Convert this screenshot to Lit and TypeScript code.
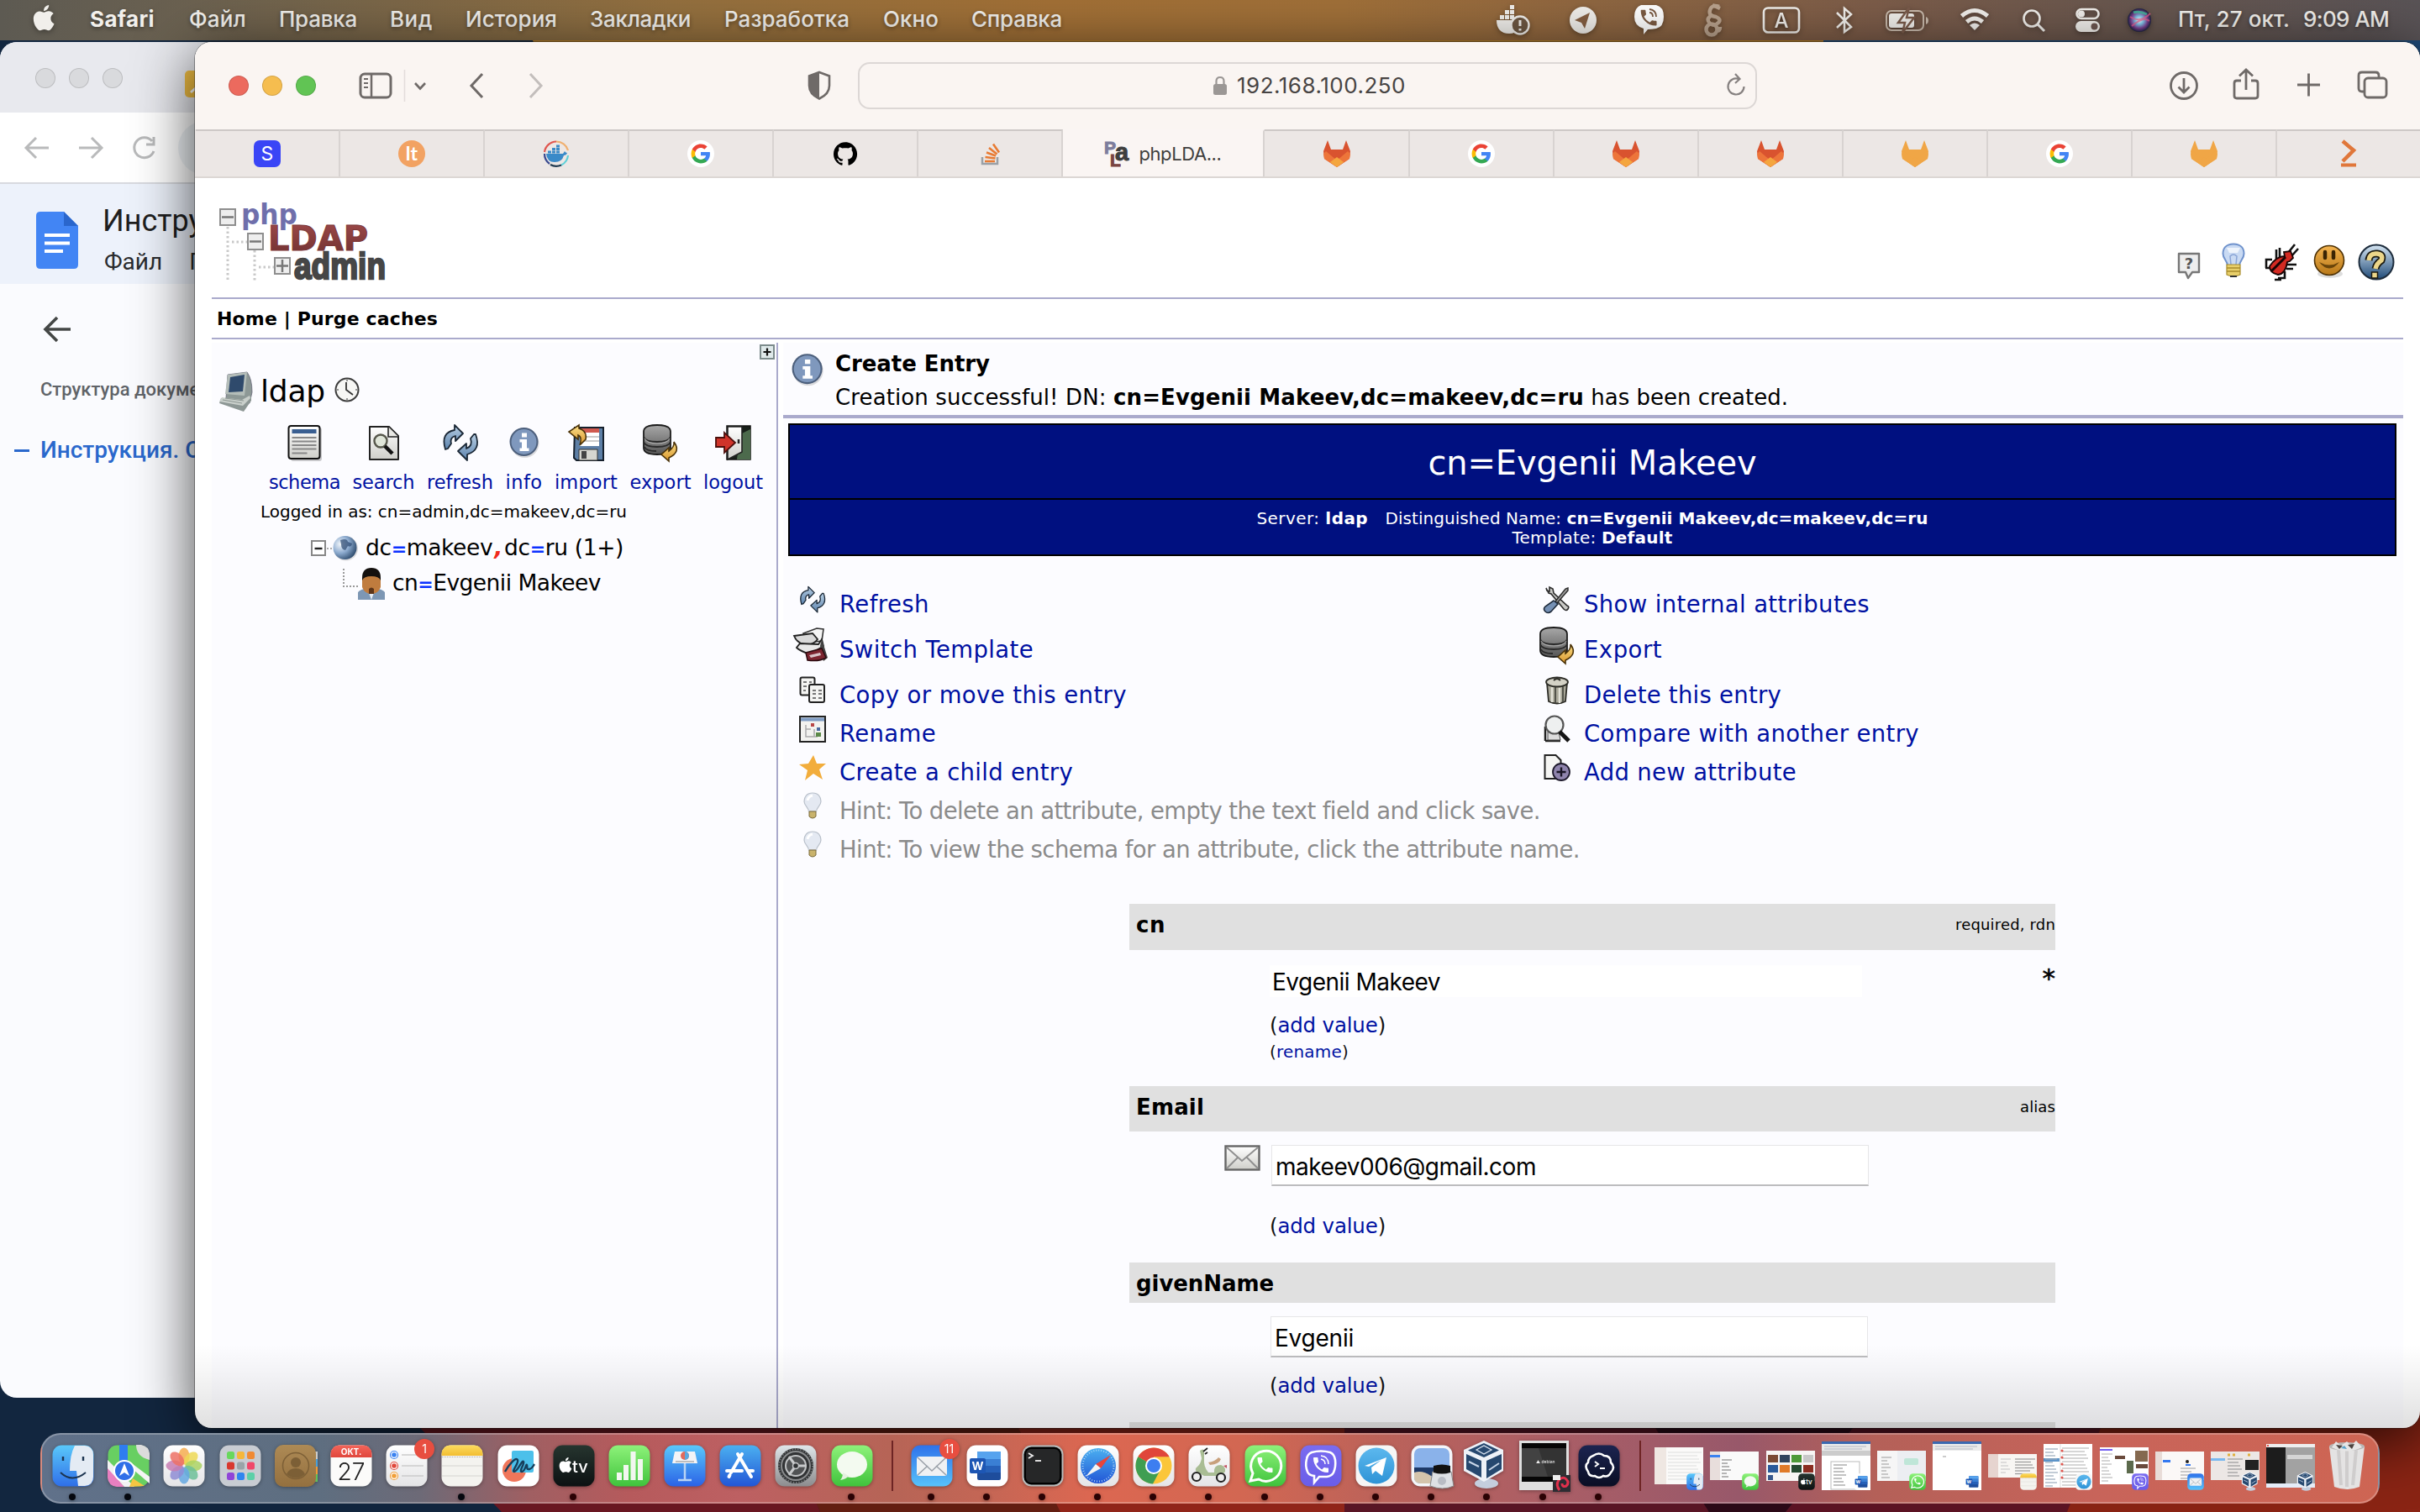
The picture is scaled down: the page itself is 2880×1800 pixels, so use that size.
import { LitElement, html, css, svg, nothing } from "lit";
import { customElement, property } from "lit/decorators.js";

/** Inline label whose tracking is adjusted so that it spans `w` pixels. */
@customElement("fit-text")
class FitText extends LitElement {
  @property({ type: Number }) w = 0;
  static styles = css`
    :host { display: inline-block; white-space: pre; }
  `;
  render() {
    return html`<slot></slot>`;
  }
  firstUpdated() {
    const natural = this.getBoundingClientRect().width;
    const count = (this.textContent || "").length;
    if (this.w && count) this.style.letterSpacing = `${(this.w - natural) / count}px`;
  }
}

const fit = (w: number, text: unknown, cls = "") => html`<fit-text class=${cls} w=${w}>${text}</fit-text>`;
const pic = (w: number, h: number, body: unknown, vb = `0 0 ${w} ${h}`) =>
  html`<svg class="pic" width=${w} height=${h} viewBox=${vb}>${body}</svg>`;

const APPLE = "M12.152 6.896c-.948 0-2.415-1.078-3.96-1.04-2.04.027-3.91 1.183-4.961 3.014-2.117 3.675-.546 9.103 1.519 12.09 1.013 1.454 2.208 3.09 3.792 3.039 1.52-.065 2.09-.987 3.935-.987 1.831 0 2.35.987 3.96.948 1.637-.026 2.676-1.48 3.676-2.948 1.156-1.688 1.636-3.325 1.662-3.415-.039-.013-3.182-1.221-3.22-4.857-.026-3.04 2.48-4.494 2.597-4.559-1.429-2.09-3.623-2.324-4.39-2.376-2-.156-3.675 1.09-4.61 1.09zM15.53 3.83c.843-1.012 1.4-2.427 1.245-3.83-1.207.052-2.662.805-3.532 1.818-.78.896-1.454 2.338-1.273 3.714 1.338.104 2.715-.688 3.559-1.701";
const GITHUB = "M12 .297c-6.63 0-12 5.373-12 12 0 5.303 3.438 9.8 8.205 11.385.6.113.82-.258.82-.577 0-.285-.01-1.04-.015-2.04-3.338.724-4.042-1.61-4.042-1.61C4.422 18.07 3.633 17.7 3.633 17.7c-1.087-.744.084-.729.084-.729 1.205.084 1.838 1.236 1.838 1.236 1.07 1.835 2.809 1.305 3.495.998.108-.776.417-1.305.76-1.605-2.665-.3-5.466-1.332-5.466-5.93 0-1.31.465-2.38 1.235-3.22-.135-.303-.54-1.523.105-3.176 0 0 1.005-.322 3.3 1.23.96-.267 1.98-.399 3-.405 1.02.006 2.04.138 3 .405 2.28-1.552 3.285-1.23 3.285-1.23.645 1.653.24 2.873.12 3.176.765.84 1.23 1.91 1.23 3.22 0 4.61-2.805 5.625-5.475 5.92.42.36.81 1.096.81 2.22 0 1.606-.015 2.896-.015 3.286 0 .315.21.69.825.57C20.565 22.092 24 17.592 24 12.297c0-6.627-5.373-12-12-12";
const PHONE = "M6.62 10.79c1.44 2.83 3.76 5.14 6.59 6.59l2.2-2.2c.27-.27.67-.36 1.02-.24 1.12.37 2.33.57 3.57.57.55 0 1 .45 1 1V20c0 .55-.45 1-1 1-9.39 0-17-7.61-17-17 0-.55.45-1 1-1h3.5c.55 0 1 .45 1 1 0 1.25.2 2.45.57 3.57.11.35.03.74-.25 1.02l-2.2 2.2z";

/* Gradients shared by every drawing on the page. */
const lg = (id: string, a: string, b: string) => svg`<linearGradient id=${id} x1="0" y1="0" x2="0" y2="1"><stop offset="0" stop-color=${a}/><stop offset="1" stop-color=${b}/></linearGradient>`;
const defs = html`<svg class="defs" width="0" height="0"><defs>
  ${lg("gFinder", "#5ac8fa", "#2f6fe8")}${lg("gWhite", "#ffffff", "#e4e4e6")}${lg("gGreen", "#8ef27a", "#3fc33c")}
  ${lg("gBlue", "#5ac8fb", "#2a62e6")}${lg("gStore", "#4bb0f0", "#2256d6")}${lg("gMail", "#2f72ea", "#57c2fa")}
  ${lg("gGray", "#dfe6ea", "#8c8c8e")}${lg("gTan", "#ad8a55", "#94703f")}${lg("gTv", "#26352f", "#0c1112")}
  ${lg("gViber", "#7a6cf0", "#6a5de8")}${lg("gTele", "#5cb8ee", "#2e93d6")}${lg("gTerm", "#1c2450", "#0a0e24")}
  ${lg("gMetal", "#a8a8a8", "#565656")}${lg("gSteel", "#b8cfe4", "#5b82ac")}${lg("gPaper", "#ffffff", "#cfcfca")}
  ${lg("gGold", "#fbe08a", "#d9952a")}${lg("gOrb", "#d6e6f3", "#1f4a78")}${lg("gFace", "#f4b450", "#b87818")}
  ${lg("gLdap", "#a04a4a", "#6e3030")}${lg("gCal", "#f3655a", "#e0463c")}${lg("gNote", "#fcdc60", "#f2bd30")}
  <radialGradient id="gEarth" cx=".3" cy=".35" r=".75"><stop offset="0" stop-color="#f2f6fa"/><stop offset=".5" stop-color="#8eacd0"/><stop offset="1" stop-color="#2c4a6c"/></radialGradient>
  <radialGradient id="gSiri"><stop offset="0" stop-color="#fff"/><stop offset=".35" stop-color="#7fc4e8"/><stop offset=".7" stop-color="#7a3f8f"/><stop offset="1" stop-color="#1d2340"/></radialGradient>
</defs></svg>`;

/* ---------- menu bar ---------- */
const W = "#f1efeb";
const menus: [string, number, number][] = [
  ["Файл", 225, 68], ["Правка", 332, 93], ["Вид", 464, 51], ["История", 554, 109],
  ["Закладки", 702, 120], ["Разработка", 862, 149], ["Окно", 1051, 66], ["Справка", 1156, 108],
];
const statusIcons: [number, number, unknown][] = [
  [1780, 42, svg`<g fill=${W}><path d="M1 24h25c3-1 5-1 6 1-1 8-6 15-16 15C6 40 1 34 1 24z"/><path d="M5 17h5v5H5zM11 17h5v5h-5zM17 17h5v5h-5zM11 11h5v5h-5zM17 11h5v5h-5zM17 5h5v5h-5z" transform="translate(0 1)"/></g><circle cx="29" cy="30" r="10.500" fill="#6d5742" stroke=${W} stroke-width="2.400"/><path d="M29 24v7M29 34v2.500" stroke=${W} stroke-width="3"/>`],
  [1867, 34, svg`<circle cx="17" cy="24" r="16" fill=${W}/><path d="M7 24 25 15l-6 19-4-7z" fill="#855f42"/>`],
  [1943, 38, svg`<path d="M10 6h18q9 2 9 14t-9 14q-5 1-10 1l-5 6v-7q-11-3-11-14T10 6z" fill="#fff"/><g transform="translate(6.500 8.500) scale(1.050)"><path d=${PHONE} fill="#7b5a42"/></g><path d="M20 11q8 1 8 9M20 15q4 0 4 5" stroke="#7b5a42" stroke-width="1.800" fill="none"/>`],
  [2025, 26, svg`<g fill="none" stroke="#b9a28d" stroke-width="4.500"><path d="M21 8q-9-3-11 4t7 8q7 3 3 7t-8 2"/><circle cx="12" cy="35" r="6.500"/><path d="M13 18q-9 4-3 10M18 36q4 2 4-4M13 6l9 4"/></g>`],
  [2097, 46, svg`<rect x="2" y="9.500" width="42" height="29" rx="5" fill="none" stroke=${W} stroke-width="2.600"/><text x="23" y="33" text-anchor="middle" class="sf" font-size="24" font-weight="500" fill=${W}>A</text>`],
  [2184, 22, svg`<path d="M2 15 19 32 11 38V10l8 7L2 33" fill="none" stroke=${W} stroke-width="2.500"/>`],
  [2243, 54, svg`<rect x="2" y="13" width="44" height="23" rx="6" fill="none" stroke="#c8b9ab" stroke-width="2"/><path d="M49 20q3 1 3 4.500t-3 4.500z" fill="#c8b9ab"/><rect x="5" y="16" width="30" height="17" rx="3" fill=${W}/><path d="M29 9 16 27h8l-3 12 14-18h-9z" fill=${W} stroke="#7a5b4b" stroke-width="2.500"/>`],
  [2331, 38, svg`<g fill="none" stroke=${W} stroke-width="5"><path d="M3.500 19q15.500-13 31 0"/><path d="M9.500 26q9.500-8 19 0"/></g><path d="M19 36l-6-6q6-5 12 0z" fill=${W}/>`],
  [2405, 30, svg`<circle cx="13" cy="22" r="9.500" fill="none" stroke=${W} stroke-width="2.600"/><path d="M20 29l8 8" stroke=${W} stroke-width="3"/>`],
  [2469, 32, svg`<rect x="2.500" y="11" width="26" height="11" rx="5.500" fill="none" stroke=${W} stroke-width="2.600"/><circle cx="8" cy="16.500" r="4" fill=${W}/><rect x="1" y="25" width="29" height="13" rx="6.500" fill=${W}/><circle cx="23.500" cy="31.500" r="4" fill="#6d5751"/>`],
  [2532, 30, svg`<circle cx="14" cy="24" r="14" fill="url(#gSiri)"/><path d="M3 20q12 8 24-4M5 31q14-12 21-6" stroke="#e85c8c" stroke-width="2" fill="none" opacity=".7"/><path d="M7 15q8-2 16 2" stroke="#38d0a0" stroke-width="3" fill="none" opacity=".7"/>`],
];

/* ---------- browser tabs ---------- */
const google = svg`<circle cx="16" cy="16" r="16" fill="#fff"/><g transform="translate(3.500 3.500) scale(1.040)"><path fill="#4285f4" d="M22.560 12.250c0-.78-.07-1.530-.2-2.250H12v4.260h5.920c-.26 1.370-1.040 2.530-2.210 3.310v2.770h3.570c2.080-1.920 3.280-4.740 3.280-8.090z"/><path fill="#34a853" d="M12 23c2.970 0 5.460-.98 7.280-2.660l-3.570-2.770c-.98.66-2.230 1.060-3.710 1.060-2.860 0-5.290-1.930-6.160-4.530H2.180v2.840C3.990 20.530 7.700 23 12 23z"/><path fill="#fbbc05" d="M5.840 14.090c-.22-.69-.35-1.360-.35-2.090s.13-1.430.35-2.090V7.070H2.180C1.430 8.550 1 10.220 1 12s.43 3.450 1.180 4.930l3.660-2.840z"/><path fill="#ea4335" d="M12 5.380c1.620 0 3.060.56 4.210 1.640l3.150-3.150C17.450 2.090 14.970 1 12 1 7.700 1 3.990 3.470 2.180 7.070l3.660 2.840c.87-2.600 3.300-4.530 6.160-4.530z"/></g>`;
const fox = (a: string, b: string, c: string) => svg`<path d="M5 0l4 11h14l4-11 5 13-1 9-15 10L1 22 0 13z" fill=${a}/><path d="M16 32 1 22l-1-6 3-3 13 11 13-11 3 3-1 6z" fill=${b}/><path d="M16 32 8 26l8-6 8 6z" fill=${c}/>`;
const gitlab = fox("#d9532f", "#ed753a", "#f4a63f");
const gitlabMono = fox("#f0a646", "#f0a646", "#f0a646");
const favicons: unknown[] = [
  svg`<rect width="32" height="32" rx="7" fill="#3a45f6"/><text x="16" y="24" class="sf" font-size="23" text-anchor="middle" fill="#fff">S</text>`,
  svg`<circle cx="16" cy="16" r="16" fill="#f2a262"/><text x="16" y="24" class="lato" font-size="23" font-weight="700" text-anchor="middle" fill="#fff">lt</text>`,
  svg`<g fill="none" stroke-width="2.200"><path d="M2 14A14.500 14.500 0 0 1 16 1.500" stroke="#e0564f"/><path d="M16 1.500A14.500 14.500 0 0 1 30 12" stroke="#f0b070"/><path d="M30 18A14.500 14.500 0 0 1 22 29.500" stroke="#5fd0d8"/><path d="M22 29.500A14.500 14.500 0 0 1 9 29" stroke="#203a50"/><path d="M8 28A14.500 14.500 0 0 1 2 16" stroke="#3a4a90"/></g><path d="M4 16h20l2-3q1 2 3 2-1 3-4 3-2 8-11 8T4 16z" fill="#3a8ac8"/><path d="M6 12.500h4v3H6zM11 12.500h4v3h-4zM16 12.500h4v3h-4zM11 9h4v3h-4zM16 9h4v3h-4zM16 5.500h4v3h-4z" fill="#3a8ac8"/>`,
  google,
  svg`<g transform="translate(2 2) scale(1.170)"><path d=${GITHUB} fill="#000"/></g>`,
  svg`<path d="M7 20v8h18v-8" fill="none" stroke="#9aa0a6" stroke-width="2.500"/><g stroke="#e87b33" stroke-width="2.600"><path d="M10 25h12M10.500 20l12 1.500M12 14.500l11 4M15 9l9.500 7.500M20 4.500l7 10"/></g>`,
  null,
  gitlab, google, gitlab, gitlab, gitlabMono, google, gitlabMono,
  svg`<path d="M9 1l13 11L9 25" fill="none" stroke="#e0773a" stroke-width="4.500"/><path d="M7 29.500h18" stroke="#e0773a" stroke-width="4"/>`,
];
const plaFavicon = svg`<text x="0" y="16" class="arial" font-weight="700" font-size="21" fill="#7d7d9c" stroke="#7d7d9c">P</text><text x="7" y="31" class="arial" font-weight="700" font-size="21" fill="#7a4440" stroke="#7a4440">L</text><text x="13" y="24" class="arial" font-weight="700" font-size="29" fill="#3e3e3e" stroke="#3e3e3e">a</text>`;

/* ---------- phpLDAPadmin icons ---------- */
const arrows = svg`<g fill="url(#gSteel)" stroke="#1b2836" stroke-width="1.800" stroke-linejoin="round"><path d="M3 30Q-3 10 14 7V1l10 10-9 9v-6q-7 2-5 9l-4 6z"/><path d="M39 12q7 19-10 24v7L18 32l10-9v6q8-3 5-12l4-5z"/></g>`;
const database = svg`<path d="M2 9q0-8 16-8t16 8v19q0 8-16 8T2 28z" fill="url(#gMetal)" stroke="#1c1c1c" stroke-width="1.800"/><path d="M2 15q2 6 16 6t16-6M2 21q2 6 16 6t16-6M3 27q2 5 14 5" fill="none" stroke="#2a2a2a" stroke-width="1.800"/><path d="M3 17q3 6 15 6t15-6" fill="none" stroke="#c4c4c4" stroke-width="1.200" opacity=".7"/><path d="M38 21q9 12-6 19v4l-9-8 9-8v4q7-5 6-11z" fill="url(#gGold)" stroke="#4a3208" stroke-width="1.600"/>`;
const infoOrb = svg`<circle cx="19.500" cy="22" r="17" fill="#00000022"/><circle cx="18.500" cy="20" r="17" fill="#4c5f7c"/><circle cx="18.500" cy="20" r="15" fill="#7f98bd"/><path d="M16 9.500h6v5h-6zM13.500 17H22v10.500h2.500V31H13.500v-3.500H16V20.500h-2.500z" fill="#fff"/>`;
const bulb = svg`<path d="M11 1C4 1 1 6 1 11c0 5 5 7 5.500 12h9C16 18 21 16 21 11c0-5-3-10-10-10z" fill="#e4e9f2" stroke="#b9c0ca" stroke-width="1.200"/><path d="M5 10q1-5 6-6" stroke="#fff" stroke-width="3" fill="none"/><path d="M7 23h8v6q-4 4-8 0z" fill="#c9b36c" stroke="#7a6a3c"/>`;
const toolbar: [string, number, unknown][] = [
  ["schema", 85, pic(42, 44, svg`<rect x="4" y="4" width="37" height="40" rx="3" fill="#00000033"/><rect x="1.500" y="2" width="37" height="39" rx="3" fill="url(#gPaper)" stroke="#111" stroke-width="2"/><path d="M5.500 8.500h29" stroke="#3a5f91" stroke-width="5"/><path d="M5.500 16h29M5.500 20.500h29M5.500 25h29M5.500 29.500h29M5.500 34.500h18" stroke="#888" stroke-width="1.800"/>`)],
  ["search", 74, pic(40, 44, svg`<path d="M3 3h23l11 11v28H3z" fill="url(#gPaper)" stroke="#222" stroke-width="2" stroke-linejoin="round"/><path d="M25 3v12h12" fill="#e8e8e4" stroke="#222" stroke-width="1.600"/><circle cx="16" cy="20" r="7.500" fill="#dfe5d8" stroke="#55564a" stroke-width="2.400"/><path d="M21 26l9 9" stroke="#111" stroke-width="4.500"/>`)],
  ["refresh", 79, pic(42, 44, arrows)],
  ["info", 44, pic(38, 44, svg`<g transform="translate(0 1)">${infoOrb}</g>`)],
  ["import", 75, pic(44, 44, svg`<path d="M8 4h34v39H10l-3-3z" fill="#5d7fa6" stroke="#16202c" stroke-width="2"/><path d="M14 5h23v21H14z" fill="#fff"/><path d="M14 5h23v5H14z" fill="#d05a50"/><path d="M14 15h23M14 20h23" stroke="#bbb" stroke-width="1.500"/><path d="M13 30h22v13H13z" fill="#d6d6d0" stroke="#333"/><path d="M16 32h6v9h-6z" fill="#444"/><path d="M13 1v4q10 3 8 13l-7 7q3-10-2-12v5L1 9z" fill="url(#gGold)" stroke="#4a3208" stroke-width="1.600"/>`)],
  ["export", 73, pic(44, 44, database)],
  ["logout", 71, pic(44, 44, svg`<path d="M14 2h28v40H14z" fill="#18201a" stroke="#111" stroke-width="1.500"/><path d="M30 12l12-6v36H26z" fill="#4c6a4c"/><path d="M15 3h17v30L15 42z" fill="url(#gPaper)" stroke="#222" stroke-width="1.600"/><path d="M28 18v5" stroke="#222" stroke-width="2.500"/><path d="M1 16h10v-6l13 12-13 12v-7H1z" fill="#d0342a" stroke="#4c0f0c" stroke-width="1.800"/>`)],
];
const act: Record<string, unknown> = {
  refresh: pic(32, 34, arrows, "-1 0 44 45"),
  drawer: pic(46, 42, svg`<path d="M12 7 28 1l8 1-2 14-16 2z" fill="#f4f4f4" stroke="#333" stroke-width="1.600"/><path d="M1 10l22-3 6 7q-6 8-16 6-9-2-12-10z" fill="#d8d8d8" stroke="#222" stroke-width="1.800"/><path d="M8 19l22 1 4-6 2 8-16 10Q8 28 4 24z" fill="#e8e8e8" stroke="#222" stroke-width="1.800"/><path d="M34 14l7 22-5 4-4-18z" fill="#444"/><path d="M15 30l19-5 5 11q-8 5-22 3z" fill="#7c2530" stroke="#2c0c10" stroke-width="1.500"/><path d="M19 33l13-3 1 3-12 3z" fill="#d8c4c8"/>`),
  copy: pic(32, 34, svg`<rect x="1.500" y="1.500" width="17" height="21" rx="2" fill="#f4f4f2" stroke="#222" stroke-width="2"/><path d="M5 7h4M12 7h3M5 12h4M5 17h3" stroke="#777" stroke-width="2"/><rect x="12" y="10" width="18" height="21" rx="2" fill="#f4f4f2" stroke="#222" stroke-width="2"/><path d="M16 17h4M23 17h4M16 21h4M23 21h4M16 26h4M23 26h4" stroke="#777" stroke-width="2"/>`),
  rename: pic(32, 32, svg`<rect x="1" y="1" width="30" height="30" fill="#f3f3f0" stroke="#222" stroke-width="2"/><path d="M2 4.500h28" stroke="#7f9cc4" stroke-width="4"/><path d="M8 11v14h10M8 16h6M18 16v9h4" fill="none" stroke="#aaa" stroke-width="1.500"/><path d="M14 9h4v4h-4z" fill="#b84848"/><path d="M21 14h4v4h-4z" fill="#4a6aa0"/><path d="M20 20h6v5h-6z" fill="#5c8a48"/>`),
  star: pic(32, 32, svg`<path d="M17 1l4 10 11 0-8 7 4 12-11-7-10 8 3-12L0 12l11-1z" fill="#f2ad3c"/>`),
  bulb: pic(22, 34, bulb),
  tools: pic(32, 32, svg`<path d="M3 2l3 6 3 1 15 18q3 3 5 0t-1-4L12 8l-1-5-4-2v5L4 5z" fill="#c9c9c6" stroke="#2a2a2a" stroke-width="1.600"/><path d="M29 2l-3 1-12 15 2 2L29 5z" fill="#999" stroke="#2a2a2a" stroke-width="1.400"/><path d="M12 17l5 4-8 9q-4 3-7 0t0-6z" fill="#7590b4" stroke="#1e2a3a" stroke-width="1.600"/>`),
  database: pic(48, 46, database, "0 -1 44 46"),
  trash: pic(30, 34, svg`<path d="M3 8h24l-2 22q-10 5-20 0z" fill="#aaa89a" stroke="#2c2c26" stroke-width="1.800"/><path d="M9 13v18M18 14v18" stroke="#e4e2d8" stroke-width="2.500"/><path d="M13 13v19M22 12v19" stroke="#4a4a42" stroke-width="1.800"/><ellipse cx="15" cy="7" rx="13" ry="5.500" fill="#d4d2c6" stroke="#2c2c26" stroke-width="1.800"/><path d="M11 5q4-4 8 0" stroke="#2c2c26" stroke-width="2" fill="none"/>`),
  compare: pic(32, 34, svg`<path d="M2 31V14M2 31h18" stroke="#222" stroke-width="2.500"/><path d="M5 30V20h13l2 10z" fill="#ddd" stroke="#444"/><circle cx="13" cy="12" r="10.500" fill="#eef0f0" stroke="#555" stroke-width="2.200"/><path d="M19 20l11 11" stroke="#151515" stroke-width="5"/>`),
  add: pic(32, 34, svg`<path d="M1.500 2h13l6 6v22h-19z" fill="#f5f5f3" stroke="#222" stroke-width="2"/><circle cx="21" cy="22" r="10" fill="#8f84ad" stroke="#1e1a2c" stroke-width="1.800"/><path d="M15.500 22h11M21 16.500v11" stroke="#1a1626" stroke-width="2.400"/>`),
};
/* Drawing, left margin and top margin of each header icon. */
const headIcons: [unknown, number, number][] = [
  [pic(30, 34, svg`<path d="M3 3h24v22h-8l-5 7-3-7H3z" fill="#eee" stroke="#777" stroke-width="2.400" stroke-linejoin="round"/><text x="15" y="21" class="dj" font-size="18" font-weight="700" fill="#555" text-anchor="middle">?</text>`), 0, 11],
  [pic(30, 44, svg`<path d="M15 1.500C6 1.500 2.500 7 2.500 13c0 6 5 8 5.500 14h14c.5-6 5.500-8 5.500-14 0-6-3.500-11.500-12.500-11.500z" fill="#c9daf3" stroke="#6f92cc" stroke-width="2"/><path d="M7 6h16l-3 6H10z" fill="#eef4fc"/><path d="M12 26l-1-10q4-4 8 0l-1 10" fill="none" stroke="#8aa5d6" stroke-width="1.500"/><path d="M7 26h16v12q-8 4-16 0z" fill="#e8cf6a" stroke="#a88c2c" stroke-width="1.200"/><path d="M7 30h16M7 34h16" stroke="#a88c2c" stroke-width="1.500"/><path d="M11 39h8v2h-8z" fill="#333"/>`), 23, 1],
  [pic(46, 46, svg`<g stroke="#111" stroke-width="2.600" fill="none"><path d="M18 20V8M22 18V6M6 30V20h7M5 30h5M31 26h11M30 31h8M20 42h8V34M16 44h8M32 12l8-10M36 16l8-9"/></g><path d="M10 28q8-12 18-12l-1-5 8-1 3 8-4 4-3 1q-2 14-11 15-10-2-10-10z" fill="#d42a22" stroke="#1a0505" stroke-width="1.800"/><path d="M12 34 29 17" stroke="#1a0505" stroke-width="3"/>`), 18, 1],
  [pic(38, 42, svg`<ellipse cx="20" cy="36" rx="15" ry="5" fill="#00000022"/><circle cx="19" cy="20" r="17.500" fill="url(#gFace)" stroke="#4e3206" stroke-width="1.600"/><path d="M14 10v7M24 10v7" stroke="#3a2404" stroke-width="4.500" stroke-linecap="round"/><path d="M7 22q12 15 24 0-12 7-24 0z" fill="#6a450a"/>`), 16, 2],
  [pic(46, 48, svg`<circle cx="23" cy="23" r="20.500" fill="url(#gOrb)" stroke="#1d2c3c" stroke-width="2"/><path d="M14 21q1-9 10-8 8 1 5 8-6 4-7 10" fill="none" stroke="#1c1a10" stroke-width="9"/><path d="M14 21q1-9 10-8 8 1 5 8-6 4-7 10" fill="none" stroke="#ecd68a" stroke-width="5.500"/><rect x="17.500" y="35" width="7" height="7" fill="#ecd68a" stroke="#1c1a10" stroke-width="1.500"/>`), 14, 1],
];
const logo = pic(204, 104, svg`
  <g stroke="#c9c9c9" stroke-width="3" stroke-dasharray="2.500 3" fill="none"><path d="M13 36v66M45 64v38M18 54h20M50 84h18"/></g>
  <g fill="#eee" stroke="#8e8e8e" stroke-width="2"><rect x="4" y="15" width="18" height="19"/><rect x="37" y="44" width="18" height="19"/><rect x="69" y="73" width="18" height="19"/></g>
  <path d="M6 24.500h14M39 53.500h14M71 82.500h14M78 75v15" stroke="#777" stroke-width="2.500"/>
  <text x="29" y="33" class="dj" font-size="34" font-weight="700" fill="#6f6fab" textLength="67" lengthAdjust="spacingAndGlyphs">php</text>
  <text x="61" y="64" class="dj" font-size="40" font-weight="700" fill="url(#gLdap)" stroke="#7c3838" stroke-width="1" textLength="119" lengthAdjust="spacingAndGlyphs">LDAP</text>
  <text x="92" y="98" class="arial" font-size="45" font-weight="700" fill="#464646" stroke="#464646" stroke-width="2.400" textLength="109" lengthAdjust="spacingAndGlyphs">admin</text>`);

const actions: [string, string, number, string, string, number][] = [
  ["refresh", "Refresh", 107, "tools", "Show internal attributes", 340],
  ["drawer", "Switch Template", 231, "database", "Export", 93],
  ["copy", "Copy or move this entry", 342, "trash", "Delete this entry", 235],
  ["rename", "Rename", 115, "compare", "Compare with another entry", 399],
  ["star", "Create a child entry", 278, "add", "Add new attribute", 253],
];

/* ---------- dock ---------- */
const R = (fill: string) => svg`<rect x=".5" y=".5" width="49" height="49" rx="11" fill=${fill}/>`;
const apps: Record<string, unknown> = {
  finder: svg`${R("url(#gFinder)")}<path d="M27 1h12q10 1 10 11v26q0 10-10 11H31q-1-9-2-18h-8Q21 12 27 1z" fill="#e4ebf4"/><path d="M13 14v5M37 14v5" stroke="#1c3450" stroke-width="2.400"/><path d="M10 33q14 13 30 0" fill="none" stroke="#1c3450" stroke-width="2"/>`,
  maps: svg`${R("#68cf62")}<path d="M0 26l20 24H11Q1 49 0 39z" fill="#e87fc0"/><path d="M0 18l32 32H20L0 28z" fill="#f2f2f2"/><path d="M26 50l4-10 14 9z" fill="#f5c542"/><path d="M26 20l24 18v8L24 24z" fill="#f4f4f4"/><path d="M14 0h10v30H14z" fill="#2f7cf0"/><path d="M34 0q0 14 16 18V10Q49 2 40 0z" fill="#dcdcdc"/><circle cx="20" cy="31" r="12" fill="#2f6fe8" stroke="#fff" stroke-width="2"/><path d="M20 22l6 15-6-4-6 4z" fill="#fff"/>`,
  photos: svg`${R("url(#gWhite)")}<g opacity=".85">${["#f5a033", "#ecd33a", "#9fce4a", "#57b88a", "#4f9de0", "#7f7cd0", "#c06aa8", "#ec5a4c"].map((c, i) => svg`<ellipse cx="25" cy="13.500" rx="6.500" ry="10" fill=${c} opacity=".85" transform=${`rotate(${i * 45} 25 25)`}/>`)}</g>`,
  launch: svg`${R("#c8ccd2")}${["#68d85c", "#f5b73a", "#f08a34", "#d8382e", "#9aa4a8", "#f0486a", "#8f45d8", "#2f86f0", "#5cd0a8"].map((c, i) => svg`<rect x=${9 + (i % 3) * 12} y=${8 + Math.floor(i / 3) * 12.5} width="9" height="9" rx="2.500" fill=${c}/>`)}`,
  contacts: svg`<path d="M46 8h5v9h-5z" fill="#ccc"/><path d="M46 17h5v9h-5z" fill="#4aa0d8"/><path d="M46 26h5v9h-5z" fill="#f09a38"/><path d="M46 35h5v9h-5z" fill="#62c058"/><rect width="49" height="50" rx="10" fill="url(#gTan)"/><circle cx="25" cy="25" r="15.500" fill="none" stroke="#7c5f36" stroke-width="1.500"/><circle cx="25" cy="21" r="6" fill="#7c5f36"/><path d="M14 35q3-7 11-7t11 7q-11 9-22 0z" fill="#7c5f36"/>`,
  calendar: svg`${R("#fbfbfa")}<path d="M.5 15V11Q1 1 11 .5h28Q49 1 49.500 11v4z" fill="url(#gCal)"/><text x="25" y="12" class="sf" font-size="10" font-weight="700" text-anchor="middle" fill="#fff">ОКТ.</text><text x="25" y="42" class="sf" font-size="29" font-weight="300" text-anchor="middle" fill="#222" textLength="33" lengthAdjust="spacingAndGlyphs">27</text>`,
  reminders: svg`${R("url(#gWhite)")}<path d="M19 12h26M19 25h26M19 37h26" stroke="#ccc" stroke-width="1.500"/><g fill="#fff" stroke-width="1.200"><circle cx="10" cy="12" r="4.500" stroke="#3a82f0"/><circle cx="10" cy="25" r="4.500" stroke="#e0483c"/><circle cx="10" cy="37" r="4.500" stroke="#f0a03a"/></g><circle cx="10" cy="12" r="2.800" fill="#3a82f0"/><circle cx="10" cy="25" r="2.800" fill="#e0483c"/><circle cx="10" cy="37" r="2.800" fill="#f0a03a"/>`,
  notes: svg`${R("#f4f3ef")}<path d="M.5 13v-2Q1 1 11 .5h28Q49 1 49.500 11v2z" fill="url(#gNote)"/><path d="M1 14.500h48" stroke="#aaa" stroke-dasharray="1 1"/><path d="M1 25h48M1 37h48" stroke="#d4d4d0"/>`,
  freeform: svg`${R("#fff")}<circle cx="20" cy="30" r="14" fill="#f0765a"/><rect x="17" y="7" width="26" height="26" rx="2" fill="#4cc0ea"/><path d="M9 32C14 23 22 14 24 18S16 32 20 32 29 18 31 20 25 32 29 32 34 22 35 24 34 30 38 29 42 26 44 23" fill="none" stroke="#173f5c" stroke-width="2.400"/>`,
  tv: svg`${R("url(#gTv)")}<g transform="translate(6 15) scale(.75)"><path d=${APPLE} fill="#fff"/></g><text x="23" y="33" class="sf" font-size="20" font-weight="500" fill="#fff">tv</text>`,
  numbers: svg`${R("url(#gGreen)")}<path d="M10 33h6v9h-6zM18 24h6v18h-6zM26.500 8h6v34h-6zM35 17h6v25h-6z" fill="#f2f7f0"/>`,
  keynote: svg`${R("url(#gBlue)")}<path d="M13 8h24l3 14H10z" fill="#f4f4f6"/><path d="M14 20h22" stroke="#888"/><circle cx="25" cy="13" r="5" fill="#e06a5c"/><path d="M25 13V8a5 5 0 0 1 0 10z" fill="#58a8e0"/><path d="M25 22v20M17 42h16" stroke="#b8d4f4" stroke-width="2.500"/>`,
  store: svg`${R("url(#gStore)")}<g stroke="#fff" stroke-width="4" stroke-linecap="round"><path d="M27 11 14 33M22 11l16 27M9 31h18M35 31h5M12.500 36l-1 2"/></g>`,
  settings: svg`${R("url(#gGray)")}<circle cx="25" cy="25" r="21" fill="#303234"/><circle cx="25" cy="25" r="17" fill="none" stroke="#8a8c8e" stroke-width="2"/><circle cx="25" cy="25" r="12" fill="#505254" stroke="#c0c2c4" stroke-width="2"/><path d="M25 25h13M25 25l-8-11M25 25l-8 11" stroke="#c8cacc" stroke-width="3"/><circle cx="25" cy="25" r="3.500" fill="#303234" stroke="#c8cacc" stroke-width="1.500"/><circle cx="25" cy="25" r="20" fill="none" stroke="#77797b" stroke-width="2" stroke-dasharray="1.500 1.800"/>`,
  messages: svg`${R("url(#gGreen)")}<ellipse cx="25" cy="23.500" rx="18" ry="15.500" fill="#f3faf0"/><path d="M14 33q0 6-3 9 7-1 10-5z" fill="#e4f0e0"/>`,
  mail: svg`${R("url(#gMail)")}<rect x="7" y="14" width="36" height="23" rx="3" fill="#f0f1f3"/><path d="M8 15l17 16 17-16M8 36l12-11M42 36 30 25" fill="none" stroke="#9aa0a8" stroke-width="1.500"/>`,
  word: svg`${R("#fff")}<rect x="13" y="8" width="28" height="34" rx="2" fill="#1e4d9c"/><path d="M13 8h28v9H13z" fill="#56a3ee"/><path d="M13 17h28v8H13z" fill="#3a7fd4"/><path d="M13 25h28v8H13z" fill="#2660b8"/><rect x="4" y="16" width="19" height="18" rx="2" fill="#1d56b4"/><text x="13.500" y="30" class="sf" font-size="13.500" font-weight="700" fill="#fff" text-anchor="middle">W</text>`,
  terminal: svg`${R("#b8bcbc")}<rect x="2.500" y="2.500" width="45" height="45" rx="9" fill="#000"/><rect x="5" y="5" width="40" height="40" rx="6" fill="#262728"/><path d="M8 10l5 3-5 3" stroke="#eee" stroke-width="1.800" fill="none"/><path d="M16 19h7" stroke="#eee" stroke-width="1.800"/>`,
  safari: svg`${R("url(#gWhite)")}<circle cx="25" cy="25" r="21" fill="url(#gStore)"/><circle cx="25" cy="25" r="18.500" fill="none" stroke="#bfe0f8" stroke-width="2" stroke-dasharray=".8 2.200"/><path d="M40 12 28 28l-6-5z" fill="#e8453c"/><path d="M10 38l12-15 6 5z" fill="#f4f4f4"/>`,
  chrome: svg`${R("url(#gWhite)")}<circle cx="25" cy="25" r="21.500" fill="#fbc63a"/><path d="M25 25 6.400 14.300A21.500 21.500 0 0 1 43.600 14.300H25z" fill="#e0463a"/><path d="M25 25 6.400 14.300A21.500 21.500 0 0 0 24 46.500l9-17z" fill="#3f9e52"/><circle cx="25" cy="25" r="10" fill="#fff"/><circle cx="25" cy="25" r="8" fill="#3d7ef0"/>`,
  scooter: svg`${R("url(#gWhite)")}<path d="M14 7q4-3 5 0l0 9q-1 10 5 17h7q-1-9 8-9 6 2 5 8l-5 5H19l-9-5q-3-3 1-6 4-3 5-10z" fill="#a9bd94"/><path d="M24 21q8-1 12-6l3 2q-2 6-13 7z" fill="#c8a07c"/><path d="M18 8l5-4M20 11l3-2" stroke="#222" stroke-width="1.800"/><path d="M42 25l4-1v4z" fill="#c05060"/><g fill="#eee" stroke="#222" stroke-width="2.200"><circle cx="10" cy="38" r="5"/><circle cx="39" cy="39" r="5"/></g>`,
  whatsapp: svg`${R("url(#gGreen)")}<path d="M7 43l3-9A18 18 0 1 1 17 41z" fill="none" stroke="#fff" stroke-width="3"/><g transform="translate(12.500 12)"><path d=${PHONE} fill="#fff"/></g>`,
  viber: svg`${R("url(#gViber)")}<path d="M14 9q11-3 22 0 5 2 6 9 1 8-2 15-2 4-8 5H23l-6 7v-8q-7-1-8-5-3-7-1-15 1-6 6-8z" fill="none" stroke="#fff" stroke-width="2.600"/><g transform="translate(13 12)"><path d=${PHONE} fill="#fff"/></g><path d="M25 13q9 1 9 10M25 17q5 1 5 6" stroke="#fff" stroke-width="1.500" fill="none"/>`,
  telegram: svg`${R("#f6f6f6")}<circle cx="25" cy="25" r="21.500" fill="url(#gTele)"/><path d="M11 25 37 15l-5 22-8-6-4 4-1-8 12-9-15 8z" fill="#fff"/>`,
  preview: svg`${R("#f4f6fa")}<rect x="4" y="4" width="42" height="42" rx="7" fill="#8ab2ea"/><path d="M4 27h42v10H4z" fill="#1e3a68"/><path d="M4 33q10-3 20 4v9H11q-7-1-7-7z" fill="#d4c4ac"/><path d="M26 32h22l3 17q-13 6-28 0z" fill="#dde0e4" stroke="#888"/><path d="M27 25q10-3 20 0v8q-10 3-20 0z" fill="#111"/><circle cx="37" cy="43" r="5" fill="#b8bcc4"/>`,
  vbox: svg`<ellipse cx="24" cy="46" rx="14" ry="6" fill="#c4cede"/><path d="M21-5 44 6v25L21 44-3 31V6z" fill="#eef2f8"/><path d="M21-2 39 6.500 21 15 2 6.500zM0 11l18 8v20L0 29zM24 19l18-8v18L24 40z" fill="#26486f"/><path d="M12 6l9-5 9 5-9 5z" fill="none" stroke="#dfe8f4" stroke-width="1.200"/><path d="M3 20l12 6M27 30l12-8" stroke="#c8d6e8" stroke-width="2"/>`,
  vm: svg`<rect x="-4" y="-5" width="59" height="59" fill="#dedede"/><rect x="-1" y="-2" width="53" height="46" fill="#060606"/><path d="M-1 4h53v34H-1z" fill="#333"/><path d="M-1 4h20L30 38H-1z" fill="#424242"/><text x="16" y="22" font-size="5" class="sf" fill="#eee">▲ debian</text><rect x="36" y="36" width="21" height="20" fill="#2c2c32"/><path d="M44 54q-5-6-1-12 5-5 9-1 4 4 0 8-5 2-5-3" fill="none" stroke="#e0304c" stroke-width="3"/><rect x="36" y="36" width="9" height="6" fill="#eee"/>`,
  termius: svg`${R("url(#gTerm)")}<path d="M18 13q7-5 13 0 8 0 8 8 6 6 0 12-3 6-9 4-5 4-10 0-7 1-8-5-5-7 0-11 0-6 6-8z" fill="none" stroke="#fff" stroke-width="2.500"/><path d="M20 20l4 3-4 3" stroke="#fff" stroke-width="2" fill="none"/><path d="M26 28h6" stroke="#fff" stroke-width="2"/>`,
};
const dockApps: [string, boolean, string?][] = [
  ["finder", true], ["maps", true], ["photos", false], ["launch", false], ["contacts", false], ["calendar", false],
  ["reminders", false, "1"], ["notes", true], ["freeform", false], ["tv", true], ["numbers", false], ["keynote", false],
  ["store", false], ["settings", false], ["messages", true],
];
const dockOpen: [string, boolean, string?][] = [
  ["mail", true, "11"], ["word", true], ["terminal", true], ["safari", true], ["chrome", true], ["scooter", true],
  ["whatsapp", true], ["viber", true], ["telegram", true], ["preview", true], ["vbox", true], ["vm", true], ["termius", true],
];
const lines = (x: number, y: number, n: number, w: number, c = "#bbb", step = 4) =>
  Array.from({ length: n }, (_, i) => svg`<path d=${`M${x} ${y + i * step}h${w - ((i * 5) % 7)}`} stroke=${c} stroke-width="1.200"/>`);
const page = svg`<rect width="58" height="58" fill="#fff"/><path d="M0 0h58v3H0z" fill="#3a68b0"/><path d="M0 3h58v8H0z" fill="#ebebeb"/>${lines(3, 6, 2, 50, "#b4b8c4", 3)}`;
const thumbs: [number, string, unknown][] = [
  [44, "finder", svg`<rect width="58" height="44" fill="#fbfaf9"/><path d="M0 0h14v44H0z" fill="#efe7e2"/>${lines(16, 6, 9, 40, "#ddd")}`],
  [34, "messages", svg`<rect width="58" height="34" fill="#fafafa"/><path d="M0 0h12v34H0z" fill="#e8dedc"/><path d="M0 4h12v3H0z" fill="#3a82f0"/>${lines(14, 10, 6, 12, "#888")}`],
  [36, "tv", svg`<rect width="58" height="36" fill="#f7f5f4"/>${["#7a4a34", "#30445c", "#4e9a38", "#c8c8c8", "#2a5a9a", "#e07a28", "#264a30", "#8a2c20"].map((c, i) => svg`<rect x=${2 + (i % 4) * 14} y=${5 + Math.floor(i / 4) * 12} width="12" height="9" fill=${c}/>`)}<path d="M2 29h6v6H2z" fill="#38588c"/>`],
  [58, "word", svg`${page}<path d="M0 14h58" stroke="#ccc" stroke-width="6"/><rect x="11" y="24" width="34" height="33" fill="#fff" stroke="#bbb"/>${lines(14, 28, 7, 16, "#999")}`],
  [36, "whatsapp", svg`<rect width="58" height="36" fill="#f6f6f6"/><path d="M24 0h34v36H24z" fill="#eceef2"/>${lines(5, 8, 7, 12, "#aaa")}<rect x="32" y="9" width="17" height="8" rx="2" fill="#bfe6d8"/>`],
  [58, "word", svg`${page}<path d="M12 18h4" stroke="#999"/>`],
  [28, "notes", svg`<rect width="58" height="28" fill="#f8f6f3"/><path d="M0 0h12v28H0z" fill="#e6d4cf"/>${lines(15, 6, 5, 12, "#ccc")}${lines(32, 6, 6, 24, "#999", 3.5)}`],
  [52, "telegram", svg`<rect width="58" height="52" fill="#fff"/><path d="M0 17h19v4H0z" fill="#5c94c8"/>${lines(2, 6, 12, 15, "#9ab")}${lines(22, 5, 12, 32, "#bbb")}<path d="M20 0v52" stroke="#ddd"/>${[8, 16, 24, 32, 40].map((y) => svg`<circle cx="22" cy=${y} r="1.600" fill="#e0564f"/>`)}`],
  [44, "viber", svg`<rect width="58" height="44" fill="#fff"/><path d="M0 2h15v2H0z" fill="#7360f2"/>${lines(2, 8, 9, 13, "#bbb")}<path d="M42 4h15v13H42z" fill="#85694f"/><path d="M32 16h8v15h-8z" fill="#5c6a4c"/><path d="M18 10h12v4H18zM43 20h14v5H43z" fill="#6a4a3c"/>`],
  [34, "mail", svg`<rect width="58" height="34" fill="#fbf8f7"/><path d="M0 0h8v34H0z" fill="#e8dcd8"/><path d="M9 10h9v3H9z" fill="#3478f0"/><circle cx="38" cy="12" r="2" fill="#222"/><path d="M36 15h6v2h-6z" fill="#3478f0"/>${lines(30, 20, 4, 18, "#aaa")}`],
  [34, "vbox", svg`<rect width="58" height="34" fill="#ece7e5"/><path d="M0 8h17v3H0z" fill="#78b8f0"/><path d="M41 10h16v12H41z" fill="#222"/>${lines(20, 9, 6, 18, "#999")}<path d="M20 4h3M26 4h3M44 4h3" stroke="#e0b040" stroke-width="3"/>`],
  [52, "vbox", svg`<rect width="58" height="52" fill="#a2a2a2"/><path d="M0 0h58v4H0z" fill="#eee"/><path d="M0 4h23v43H0z" fill="#1c1c1c"/><path d="M25 13h30v5H25z" fill="#d4d4d4"/><path d="M0 47h58v5H0z" fill="#e4ecf8"/><path d="M1 2h2" stroke="#e0564f" stroke-width="2"/>`],
];

@customElement("app-root")
class AppRoot extends LitElement {
  static styles = css`
    :host { display: block; }
    * { box-sizing: border-box; }
    svg { display: block; flex: none; overflow: visible; }
    .defs { position: absolute; }
    .sf { font-family: Inter, "Liberation Sans", sans-serif; }
    .lato { font-family: Lato, sans-serif; }
    .arial { font-family: "Liberation Sans", sans-serif; }
    .dj { font-family: "DejaVu Sans", sans-serif; }
    .desktop { position: relative; width: 2880px; height: 1800px; overflow: hidden; background: #12263f; }
    .wall { position: absolute; left: 0; top: 0; }
    b { font-weight: 700; }

    .menubar { position: absolute; inset: 0 0 auto 0; height: 48px; font: 500 26px/46px Inter, sans-serif; color: #f2f0ec; text-shadow: 0 2px 5px #0006;
      background: linear-gradient(90deg, #5d5a52 0, #6b6150 230px, #7f6846 520px, #93703f 800px, #a27036 1250px, #a07039 1600px, #8e6641 1900px, #7c5c49 2230px, #66564f 2560px, #595356 2880px); }
    .menus { display: grid; height: 46px; }
    .menus > * { grid-area: 1 / 1; justify-self: start; }
    .menus svg { filter: drop-shadow(0 2px 3px #0005); }
    .safari { font-weight: 700; }

    .win { position: absolute; border-radius: 20px; overflow: hidden; }
    .back { left: 0; top: 50px; width: 900px; height: 1614px; background: #fafbfe; font-family: Roboto, sans-serif; }
    .strip { height: 84px; background: #e8e9ee; display: flex; padding: 31px 0 0 42px; gap: 16px; }
    .dot { width: 24px; height: 24px; border-radius: 50%; border: 1px solid #0002; flex: none; }
    .dot.off { background: #d9dadd; }
    .strip .pin { margin: 3px 0 0 58px; }
    .nav { height: 85px; background: #fff; border-bottom: 2px solid #d8dadf; display: flex; align-items: center; padding-left: 28px; gap: 32px; }
    .omni { width: 400px; height: 64px; border-radius: 32px; background: #eff3f6; margin-left: -8px; }
    .docs { height: 119px; background: #edf2fb; display: flex; padding: 0 0 0 43px; gap: 29px; }
    .docs > svg { margin-top: 33px; }
    .docTitle { font-size: 36px; line-height: 46px; margin-top: 21px; color: #1f1f1f; white-space: nowrap; font-family: Roboto, sans-serif; }
    .docMenu { display: flex; gap: 32px; font-size: 28px; line-height: 40px; margin-top: 6px; margin-left: 2px; color: #2a2c2e; }
    .outline { padding: 36px 0 0 48px; white-space: nowrap; }
    .outline .cap { margin-top: 39px; font: 500 22px/30px Roboto, sans-serif; color: #5f6368; }
    .outline .item { margin: 37px 0 0 -31px; display: flex; align-items: center; gap: 13px; font: 500 28px/40px Roboto, sans-serif; color: #2a68cc; }
    .dash { width: 18px; height: 3px; background: #2a68cc; }

    .front { left: 232px; top: 50px; width: 2648px; height: 1650px; background: #fff; font-family: "DejaVu Sans", Verdana, sans-serif; color: #000; }
    .shadow { position: absolute; left: 232px; top: 50px; width: 2648px; height: 1650px; border-radius: 20px; box-shadow: 0 0 0 1px #0005, 0 16px 70px #000b; }
    .bar { height: 104px; background: #faf5f2; display: flex; align-items: center; }
    .bar .dots { display: flex; gap: 16px; padding-left: 40px; }
    .red { background: #ec6a5e; } .yel { background: #f5bd4f; } .grn { background: #61c454; }
    .url { width: 1070px; height: 56px; border: 2px solid #dcd7d5; border-radius: 14px; display: flex; align-items: center; justify-content: space-between; padding: 0 11px 0 421px; margin: -1px 0 0 31px; }
    .addr { display: flex; align-items: center; gap: 12px; font: 400 26px/42px Inter, sans-serif; color: #474443; }
    .tabs { display: flex; height: 58px; background: #ece7e5; border-bottom: 2px solid #dcd7d4; padding-left: 1px; }
    .tab { flex: 1 1 0; border-top: 2px solid #cdc8c6; border-right: 2px solid #d8d3d1; display: flex; align-items: center; justify-content: center; }
    .tab:last-child { border-right: 0; }
    .tab.on { flex: 0 0 240px; background: #faf5f3; border-top-color: #faf5f3; gap: 11px; font: 400 22px/30px Inter, sans-serif; color: #403e3d; justify-content: flex-start; padding-left: 49px; }

    .page { padding: 0 20px; }
    .phead { height: 144px; border-bottom: 2px solid #aaaacc; display: flex; justify-content: space-between; padding: 22px 9px 0 6px; }
    .hicons { display: flex; align-items: flex-start; padding-top: 54px; }
    .pmenu { height: 48px; border-bottom: 2px solid #aaaacc; font: 700 22px/46px "DejaVu Sans", sans-serif; padding: 1px 0 0 6px; }
    .cols { display: flex; margin-top: 4px; height: 1292px; }
    .tree { width: 674px; border-right: 2px solid #aaaacc; background: #fcfcff; flex: none; }
    .expand { display: flex; justify-content: flex-end; padding: 2px 2px 0 0; height: 22px; }
    .server { display: flex; align-items: center; height: 50px; margin-top: 12px; padding: 0 0 3px 8px; font-size: 36px; }
    .server fit-text { margin: 0 11px 0 8px; line-height: 46px; }
    .server svg:last-child { margin-top: -4px; }
    .tools { display: flex; gap: 14.500px; padding-left: 68px; margin-top: 13px; font-size: 22.500px; line-height: 28px; color: #0011a2; }
    .tool { display: flex; flex-direction: column; align-items: center; gap: 11px; }
    .logged { margin: 8px 0 0 58px; font-size: 20px; line-height: 26px; }
    .node { display: flex; align-items: center; height: 40px; font-size: 26.500px; line-height: 40px; }
    .node.a { margin: 11px 0 0 118px; } .node.b { margin: 2px 0 0 155px; }
    .node fit-text { margin-left: 9px; }
    .eq { color: #0a32ff; font-weight: 700; font-size: 22px; }
    .cm { color: #f02a1c; font-weight: 700; font-style: italic; margin: 0 2px; }

    .main { margin-left: 6px; flex: 1; background: #fcfcff; position: relative; }
    .msg { height: 90px; border-bottom: 4px solid #aaaacc; display: flex; padding: 6px 0 0 10px; gap: 12px; font-size: 26px; line-height: 39px; white-space: nowrap; }
    .msg > svg { margin-top: 4px; margin-left: -1px; margin-right: 1px; }
    .msg .l2 { line-height: 41px; }
    .entry { margin: 6px 8px 0 6px; height: 158px; border: 2px solid #000; background: #001080; color: #fff; text-align: center; }
    .entry .t { height: 89px; border-bottom: 2px solid #000; font-size: 40px; line-height: 80px; padding-top: 5px; }
    .entry .s { font-size: 20px; line-height: 23px; padding-top: 11px; }
    .acts { margin: 30px 0 0 6px; display: grid; grid-template-columns: 886px 1fr; grid-template-rows: 54px 58px repeat(5, 46px); font-size: 27.500px; line-height: 46px; color: #0011a2; }
    .act { display: flex; height: 46px; align-items: center; white-space: nowrap; }
    .act.tall { height: 54px; }
    .slot { width: 61px; padding: 0 3px 10px 0; display: flex; justify-content: center; flex: none; }
    .hint { grid-column: 1 / 3; color: #8b8b8b; }
    .form { width: 1102px; margin: 42px 0 0 412px; }
    .attr { height: 217px; }
    .attr.m { height: 210px; } .attr.g { height: 190px; }
    .attr header { height: 55px; background: #e0e0e0; display: flex; justify-content: space-between; padding-left: 8px; font: 700 26px/50px "DejaVu Sans", sans-serif; }
    .m header { height: 54px; line-height: 50px; } .g header { height: 48px; }
    header small { font-size: 18px; font-weight: 400; line-height: 49px; }
    .vals { padding-left: 167px; }
    .row { display: flex; justify-content: space-between; }
    .plain { width: 705px; height: 38px; margin-top: 18px; background: #fff; font: 400 28px/41px Inter, sans-serif; padding-left: 3px; }
    .star { font-size: 31px; line-height: 40px; margin: 13px 0 -15px; -webkit-text-stroke: .6px #000; }
    .field { width: 711px; height: 49px; margin: 16px 0 0 1px; background: #fff; border: 1px solid #e6e6e8; border-bottom: 2px solid #bdbdbf; font: 400 28px/50px Inter, sans-serif; padding-left: 4px; }
    .m .vals { display: grid; grid-template-columns: 55px 1fr; padding-left: 114px; }
    .m .field { margin-left: 0; } .m .link { grid-column: 2; margin-left: -2px; }
    .env { margin-top: 16px; margin-left: -1px; }
    .link { color: #0011a2; font-size: 24.500px; line-height: 30px; margin-top: 19px; }
    .m .link { margin-top: 33px; }
    .link i { font-style: normal; color: #111; }
    .link.sm { font-size: 20px; margin-top: 1px; }
    .fade { position: absolute; left: 232px; top: 1600px; width: 2648px; height: 100px; border-radius: 0 0 20px 20px; background: linear-gradient(#0000, #00000008 30%, #0000001f); }

    .dock { position: absolute; left: 48px; top: 1706px; width: 2784px; height: 84px; border-radius: 24px; border: 2px solid #ffffff40; display: flex; align-items: center; gap: 16.200px; padding: 0 0 6px 12px;
      background: linear-gradient(90deg, #60718a 0, #5e6e80 330px, #6d6a77 450px, #a05f62 580px, #b65a5c 700px, #bd6062 830px, #b66456 1010px, #c46655 1120px, #dc6751 1250px, #d26752 1430px, #bb625a 1600px, #aa5e66 1800px, #98586a 2020px, #b46058 2180px, #c8645a 2450px, #ce6553 2784px); }
    .app { position: relative; width: 50px; height: 50px; flex: none; filter: drop-shadow(0 1px 2px #0005); }
    .run::after { content: ""; position: absolute; left: 20px; top: 58px; width: 8px; height: 8px; border-radius: 50%; background: #2a0204; }
    .dark.run::after { background: #05080f; }
    .badge { position: absolute; right: -8px; top: -7px; width: 24px; height: 24px; border-radius: 50%; background: #e84e40; color: #fff; font: 400 14px/24px Inter, sans-serif; text-align: center; }
    .sep { width: 2px; height: 60px; background: #6e2424; flex: none; margin: 0 4px 0 6.500px; }
    .sep.two { margin: 0 0 0 7px; }
    .thumb { position: relative; width: 58px; flex: none; }
    .thumb + .thumb { margin-left: -8px; }
    .mini { position: absolute; left: 38px; }
  `;

  private dockItem([name, run, badge]: [string, boolean, string?], i: number, dark = false) {
    return html`<div class="app ${run ? "run" : ""} ${dark && i < 8 ? "dark" : ""}">
      ${pic(50, 50, apps[name])}${badge ? html`<span class="badge">${badge}</span>` : nothing}
    </div>`;
  }

  private menubar() {
    return html`<div class="menubar"><div class="menus">
      <svg style="margin-left:38px" width="29" height="46" viewBox="0 0 29 46"><g transform="translate(-1 6) scale(1.260)"><path d=${APPLE} fill=${W}/></g></svg>
      <fit-text class="safari" w="77" style="margin-left:107px">Safari</fit-text>
      ${menus.map(([t, x, w]) => html`<fit-text w=${w} style="margin-left:${x}px">${t}</fit-text>`)}
      ${statusIcons.map(([x, w, d]) => html`<svg style="margin-left:${x}px" width=${w} height="48" viewBox="0 0 ${w} 48">${d}</svg>`)}
      <fit-text w="133" style="margin-left:2592px">Пт, 27 окт.</fit-text>
      <fit-text w="102" style="margin-left:2741px">9:09 AM</fit-text>
    </div></div>`;
  }

  private backWindow() {
    return html`<div class="win back">
      <div class="strip"><i class="dot off"></i><i class="dot off"></i><i class="dot off"></i>
        <span class="pin">${pic(32, 32, svg`<rect width="32" height="32" rx="5" fill="#f0bd42"/><path d="M16 6v10M16 18l-9 8M16 18l9 8" stroke="#fff" stroke-width="3"/>`)}</span></div>
      <div class="nav">
        ${[svg`<path d="M30 16H4M15 4 3 16l12 12"/>`, svg`<path d="M2 16h26M17 4l12 12-12 12"/>`, svg`<path d="M27 20a12 12 0 1 1-2-12M27 3v9h-9"/>`].map((d) => pic(32, 32, svg`<g fill="none" stroke="#b9babb" stroke-width="3">${d}</g>`))}
        <div class="omni"></div>
      </div>
      <div class="docs">
        ${pic(50, 68, svg`<path d="M5 0h28l17 17v46q0 5-5 5H5q-5 0-5-5V5q0-5 5-5z" fill="#4285f4"/><path d="M33 0l17 17H33z" fill="#2a66cc"/><path d="M10 28h30M10 37.500h30M10 47h22" stroke="#fff" stroke-width="4"/>`)}
        <div><div class="docTitle">Инструкция</div><div class="docMenu"><span>Файл</span><span>Правка</span></div></div>
      </div>
      <div class="outline">
        ${pic(36, 36, svg`<path d="M36 18H6M20 4 6 18l14 14" fill="none" stroke="#444746" stroke-width="3.600"/>`)}
        <div class="cap">Структура документа</div>
        <div class="item"><i class="dash"></i>Инструкция. Обзор</div>
      </div>
    </div>`;
  }

  private toolbar() {
    const g = "#6f6a68";
    return html`<div class="bar">
      <div class="dots"><i class="dot red"></i><i class="dot yel"></i><i class="dot grn"></i></div>
      <svg style="margin-left:51px" width="82" height="40" viewBox="0 0 82 40"><rect x="2" y="6" width="36" height="28" rx="5" fill="none" stroke=${g} stroke-width="3"/><path d="M15 6v28" stroke=${g} stroke-width="2.500"/><path d="M6 12h5M6 17h5M6 22h5" stroke=${g} stroke-width="2"/><path d="M54.500 1v38" stroke="#e2dcda" stroke-width="1.500"/><path d="M67 17l6 6.500 6-6.500" fill="none" stroke=${g} stroke-width="2.600"/></svg>
      <svg style="margin-left:49px" width="92" height="40" viewBox="0 0 92 40"><path d="M16 6 3 20l13 14" fill="none" stroke=${g} stroke-width="3"/><path d="M73 6l13 14-13 14" fill="none" stroke="#c3bebc" stroke-width="3"/></svg>
      <svg style="margin-left:310px" width="30" height="36" viewBox="0 0 30 36"><path d="M15 2l12 4.500V18q0 10-12 15.500Q3 28 3 18V6.500z" fill="none" stroke=${g} stroke-width="2.600"/><path d="M15 2v31.500Q3 28 3 18V6.500z" fill=${g}/></svg>
      <div class="url"><div class="addr">${pic(16, 24, svg`<rect y="10" width="16" height="13" rx="2.500" fill="#9b9795"/><path d="M3.500 11V6.500q0-4.500 4.500-4.500t4.500 4.500V11" fill="none" stroke="#9b9795" stroke-width="2.200"/>`)}${fit(201, "192.168.100.250")}</div>
        ${pic(24, 30, svg`<path d="M15 7a9.500 9.500 0 1 0 6.500 9M11 1l5.500 6L11 12" fill="none" stroke="#868180" stroke-width="2.200"/>`)}</div>
      <svg style="margin-left:491px" width="262" height="42" viewBox="0 0 262 42"><g fill="none" stroke=${g} stroke-width="2.800"><circle cx="17" cy="21" r="15.500"/><path d="M17 12v17M10.500 22.500 17 29l6.500-6.500"/><path d="M85 15h-5q-3 0-3 3v15q0 3 3 3h22q3 0 3-3V18q0-3-3-3h-5M91 26V2M83 9.500 91 2l8 7.500"/><path d="M152 20h27M165.500 6.500v27"/><rect x="232" y="12" width="26" height="23" rx="4"/><path d="M232 28h-3q-4 0-4-4V9q0-4 4-4h16q4 0 4 4v3"/></g></svg>
    </div>
    <div class="tabs">${favicons.map((f) => f
      ? html`<div class="tab">${pic(32, 32, f)}</div>`
      : html`<div class="tab on">${pic(30, 32, plaFavicon)}${fit(98, "phpLDA...")}</div>`)}</div>`;
  }

  private tree() {
    const eq = html`<span class="eq">=</span>`;
    return html`<div class="tree">
      <div class="expand">${pic(18, 18, svg`<rect x="1" y="1" width="16" height="16" fill="#dfe9ea" stroke="#7d8c8c" stroke-width="2"/><path d="M4.500 9h9M9 4.500v9" stroke="#111" stroke-width="2.200"/>`)}</div>
      <div class="server">
        ${pic(42, 48, svg`<path d="M11 4 34 1q6 8 6 24l-3 13-28-6z" fill="#8d9896" stroke="#667" stroke-width=".8"/><path d="M11 4 34 1l-3 28-23-2z" fill="#b4bdb9"/><path d="M14 7l17-3-2 20-17 1z" fill="#2f4a6c"/><path d="M3 32l28 5 8-8v6l-9 13L1 38z" fill="#8d9795"/><path d="M4 31l24 3 9-5 1 3-9 9-28-5z" fill="#c9cfcb"/><path d="M5 34l23 4M8 32l22 3" stroke="#8e9894" stroke-width="1.200"/>`)}
        ${fit(77, "ldap")}
        ${pic(30, 30, svg`<circle cx="15" cy="15" r="13.500" fill="#f6f6f4" stroke="#3c3c3c" stroke-width="2"/><path d="M14 6v9l8 6" fill="none" stroke="#333" stroke-width="1.800"/><path d="M15 3v2M15 25v2M3 15h2M25 15h2" stroke="#777" stroke-width="1.500"/>`)}
      </div>
      <div class="tools">${toolbar.map(([t, w, p]) => html`<div class="tool">${p}${fit(w, t)}</div>`)}</div>
      <div class="logged">${fit(436, "Logged in as: cn=admin,dc=makeev,dc=ru")}</div>
      <div class="node a">
        ${pic(26, 20, svg`<rect x="1" y="1" width="16" height="17" fill="#fff" stroke="#888" stroke-width="2"/><path d="M4.500 10h9" stroke="#222" stroke-width="2.400"/><path d="M19 10h8" stroke="#aaa" stroke-width="2" stroke-dasharray="2 2"/>`)}
        ${pic(30, 32, svg`<circle cx="15.500" cy="16" r="14.500" fill="#00000022"/><circle cx="14.500" cy="15" r="14" fill="url(#gEarth)"/><path d="M9 6q8-3 9 2l5 2q-1 5-5 3l-3 5q-5-1-5-7z" fill="#2c4870" opacity=".7"/>`)}
        <fit-text w="307">dc${eq}makeev<span class="cm">,</span>dc${eq}ru (1+)</fit-text>
      </div>
      <div class="node b">
        ${pic(19, 40, svg`<path d="M2 2v21h17" fill="none" stroke="#999" stroke-width="2" stroke-dasharray="2 2"/>`)}
        ${pic(32, 38, svg`<path d="M0 38V29q4-4 9-4h14q5 0 9 4v9z" fill="#7d97b4"/><path d="M12 27l4 11 4-11z" fill="#e8eef4"/><path d="M5 12Q5 0 16 0t11 12v6q-4 4-11 4T5 18z" fill="#14100e"/><path d="M5 15q2-5 11-5t11 5v8q-3 8-11 8T5 23z" fill="#c07c3e"/><path d="M13 31v-6q3-3 6 0v6z" fill="#5c3418"/>`)}
        <fit-text w="248">cn${eq}Evgenii Makeev</fit-text>
      </div>
    </div>`;
  }

  private entry() {
    const add = html`<div class="link">${fit(138, html`<i>(</i>add value<i>)</i>`)}</div>`;
    return html`<div class="main">
      <div class="msg">${pic(40, 42, svg`<g transform="scale(1.060)">${infoOrb}</g>`)}
        <div><div>${fit(184, html`<b>Create Entry</b>`)}</div>
          <div class="l2">${fit(331, "Creation successful! DN: ")}${fit(560, html`<b>cn=Evgenii Makeev,dc=makeev,dc=ru</b>`)}${fit(243, " has been created.")}</div></div>
      </div>
      <div class="entry">
        <div class="t">${fit(391, "cn=Evgenii Makeev")}</div>
        <div class="s">
          <div>${fit(153, html`Server: <b>ldap</b>   `)}${fit(216, "Distinguished Name: ")}${fit(430, html`<b>cn=Evgenii Makeev,dc=makeev,dc=ru</b>`)}</div>
          <div>${fit(191, html`Template: <b>Default</b>`)}</div>
        </div>
      </div>
      <div class="acts">
        ${actions.map(([i1, t1, w1, i2, t2, w2], n) => html`
          <div class="act ${n < 2 ? "tall" : ""}"><span class="slot">${act[i1]}</span>${fit(w1, t1)}</div>
          <div class="act ${n < 2 ? "tall" : ""}"><span class="slot">${act[i2]}</span>${fit(w2, t2)}</div>`)}
        <div class="act hint"><span class="slot">${act.bulb}</span>${fit(834, "Hint: To delete an attribute, empty the text field and click save.")}</div>
        <div class="act hint"><span class="slot">${act.bulb}</span>${fit(881, "Hint: To view the schema for an attribute, click the attribute name.")}</div>
      </div>
      <div class="form">
        <section class="attr"><header>${fit(35, "cn")}<small>${fit(119, "required, rdn")}</small></header>
          <div class="vals"><div class="row"><div class="plain">${fit(200, "Evgenii Makeev")}</div><span class="star">*</span></div>
            ${add}<div class="link sm">${fit(94, html`<i>(</i>rename<i>)</i>`)}</div></div></section>
        <section class="attr m"><header>${fit(81, "Email")}<small>${fit(42, "alias")}</small></header>
          <div class="vals"><div class="env">${pic(43, 32, svg`<rect x="1.500" y="1.500" width="40" height="28" fill="url(#gPaper)" stroke="#666" stroke-width="2.400"/><path d="M3 3l18 16L40 3M3 28l13-13M40 28 27 15" fill="none" stroke="#909090" stroke-width="2"/>`)}</div>
            <div class="field">${fit(310, "makeev006@gmail.com")}</div>${add}</div></section>
        <section class="attr g"><header>${fit(164, "givenName")}</header>
          <div class="vals"><div class="field">${fit(94, "Evgenii")}</div>${add}</div></section>
        <section class="attr g"><header></header></section>
      </div>
    </div>`;
  }

  render() {
    return html`${defs}<div class="desktop">
      <svg class="wall" width="2880" height="1800" viewBox="0 0 2880 1800">
        <path d="M634 48h1560l-100 40H650z" fill="#b07a26"/><path d="M2170 48h710v120h-710z" fill="#1f4a78"/>
        <path d="M500 1700h440l36 100H597z" fill="#6a1822"/><path d="M934 1700h280l50 100H976z" fill="#641f12"/>
        <path d="M1212 1700h780l-50 100H1262z" fill="#92261a"/><path d="M1600 1700h374l60 100h-434z" fill="#5a1626"/>
        <path d="M1970 1700h235l-80 100h-91z" fill="#2c0a18"/><path d="M2205 1700h400v100h-480z" fill="#5c1424"/>
        <path d="M2500 1700l380-100v200h-420z" fill="#8a2414"/>
      </svg>
      ${this.menubar()}
      ${this.backWindow()}
      <div class="shadow"></div>
      <div class="win front">
        ${this.toolbar()}
        <div class="page">
          <div class="phead">${logo}<div class="hicons">
            ${headIcons.map(([h, ml, mt]) => html`<div style="margin:${mt}px 0 0 ${ml}px">${h}</div>`)}</div></div>
          <div class="pmenu">${fit(263, "Home | Purge caches")}</div>
          <div class="cols">${this.tree()}${this.entry()}</div>
        </div>
      </div>
      <div class="fade"></div>
      <div class="dock">
        ${dockApps.map((a, i) => this.dockItem(a, i, true))}
        <i class="sep"></i>
        ${dockOpen.map((a, i) => this.dockItem(a, i))}
        <i class="sep two"></i>
        ${thumbs.map(([h, app, d]) => html`<div class="thumb">${pic(58, h, d)}
          <svg class="mini" style="top:${h / 2 + 9}px" width="20" height="20" viewBox="0 0 50 50">${apps[app]}</svg></div>`)}
        ${pic(44, 58, svg`<path d="M1 6h42l-6 48q-15 6-30 0z" fill="#e4e3e3"/><path d="M12 10l3 42M22 10v44M33 10l-4 42" stroke="#cfcdcd" stroke-width="4"/><ellipse cx="22" cy="6" rx="21" ry="5" fill="#b8b6b6"/><path d="M4 7l5-7 6 5 7-5 5 5 6-6 7 8q-18 9-36 0z" fill="#e6e6e6"/><path d="M9 4l4 5 4-4zM23 4l5 5 3-6z" fill="#4c4440"/><path d="M15 8l4-3 3 4z" fill="#57a0c8"/>`)}
      </div>
    </div>`;
  }
}
